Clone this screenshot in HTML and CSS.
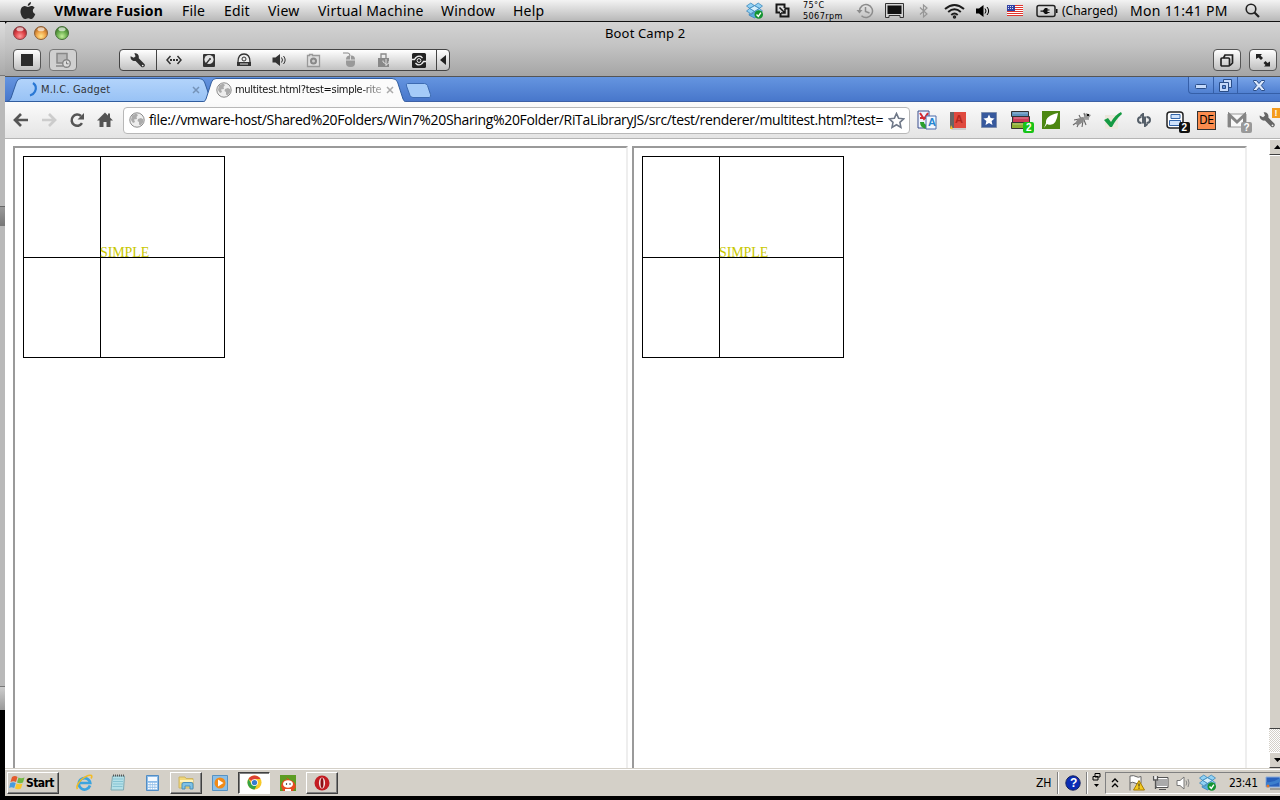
FILE: index.html
```html
<!DOCTYPE html>
<html lang="en">
<head>
<meta charset="utf-8">
<title>Boot Camp 2</title>
<link rel="stylesheet" href="styles.css">
</head>
<body>
<svg class="defs" width="0" height="0">
  <defs>
    <linearGradient id="tabBlue" x1="0" y1="0" x2="0" y2="1"><stop offset="0" stop-color="#b3d4fb"/><stop offset="1" stop-color="#98c2f5"/></linearGradient>
    <radialGradient id="red" cx=".5" cy=".75" r=".7"><stop offset="0" stop-color="#ff9c9c"/><stop offset=".5" stop-color="#e2484c"/><stop offset="1" stop-color="#9a1e25"/></radialGradient>
    <radialGradient id="amber" cx=".5" cy=".75" r=".7"><stop offset="0" stop-color="#ffe68c"/><stop offset=".5" stop-color="#f0a549"/><stop offset="1" stop-color="#a9601e"/></radialGradient>
    <radialGradient id="green" cx=".5" cy=".75" r=".7"><stop offset="0" stop-color="#c2ee9a"/><stop offset=".5" stop-color="#70b352"/><stop offset="1" stop-color="#367226"/></radialGradient>
    <symbol id="globe" viewBox="0 0 16 16"><circle cx="8" cy="8" r="7.2" fill="#ededed" stroke="#8a8a8a"/><path d="M3 3.500L7 1.500 9 3 7.500 5 8 7 5 7.500 6 10 4 11 2 8zM9 7l3-1 2.500 1.500-.5 3-2.500 3-1.500-1L10 10 8.500 9z" fill="#ababab"/></symbol>
    <symbol id="dropbox" viewBox="0 0 16 16"><g stroke="#3382b8" stroke-width=".7"><path d="M4.500 1L8 3.500 3.500 6 .5 3.800zM11.500 1L8 3.500 12.500 6l3-2.200zM.5 8.500L3.500 6 8 8.800 4.500 11zM15.500 8.500L12.500 6 8 8.800 11.500 11z" fill="#92d2f5"/><path d="M8 3.500L12.500 6 8 8.800 3.500 6z" fill="#d5effc"/><path d="M3 11l1.500 1L8 9.500l3.500 2.500 1.500-1v1.500L8 15l-5-2.500z" fill="#58ace0"/></g><circle cx="12" cy="11.700" r="4" fill="#149431"/><path d="M9.900 11.700l1.700 1.900L14 10" fill="none" stroke="#fff" stroke-width="1.300"/></symbol>
    <symbol id="wrench" viewBox="0 0 16 16"><path d="M1.500 4l3 1.500L6.200 4 5 1.200C8 .8 9.800 3 9.200 5.800l5.300 5.400c1.500 1.700-1 4.300-2.800 2.800L6.200 8.500C3.500 9 1 7 1.500 4z" fill="currentColor"/><circle cx="12.900" cy="12.700" r=".8" fill="#eee"/></symbol>
    <symbol id="speaker" viewBox="0 0 16 16"><path d="M1 5.500h3L8.500 2v12L4 10.500H1z" fill="currentColor"/><path d="M10 5.500q2 2.500 0 5M12 4q3.300 4 0 8" fill="none" stroke="currentColor"/></symbol>
    <symbol id="arrow" viewBox="0 0 16 16"><path d="M8 2L2 8l6 6M2.500 8H15" fill="none" stroke="currentColor" stroke-width="2.700"/></symbol>
    <symbol id="close" viewBox="0 0 8 8"><path d="M1 1l6 6M7 1L1 7" stroke="currentColor" stroke-width="1.500"/></symbol>
  </defs>
</svg>

<header class="menubar">
  <svg class="apple" viewBox="0 0 16 18"><path d="M11 0c.2 2-1.400 3.900-3.200 4C7.500 2 9 .4 11 0zM8 4.900c1 0 2-.9 3.500-.8 1.300 0 2.500.7 3.100 1.700-2.600 1.600-2.200 5.200.7 6.300C14.500 14.300 13 17 11.500 17c-1.300 0-1.700-.8-3.300-.8S6.100 17 5 17C2.500 17 .2 12 .5 9c.2-3 2-4.800 4.100-4.900C6 4 7 4.900 8 4.900z" fill="#2b2b2b"/></svg>
  <nav class="menus">
    <b class="m-app">VMware Fusion</b><span class="m-file">File</span><span class="m-edit">Edit</span><span class="m-view">View</span><span class="m-vm">Virtual Machine</span><span class="m-window">Window</span><span>Help</span>
  </nav>
  <div class="status">
    <svg class="s-dropbox" width="17" height="17"><use href="#dropbox"/></svg>
    <svg class="s-vm" width="15" height="15" viewBox="0 0 15 15"><path d="M5 9.500H1.500v-8h8V5M9.500 5.500h4v8h-8V10" fill="none" stroke="#161616" stroke-width="2"/><path d="M4.500 4.500l5 5M10 6v4H6" fill="none" stroke="#161616" stroke-width="1.500"/></svg>
    <div class="sensor"><span>75°C</span><span>5067rpm</span></div>
    <svg class="s-clock" width="18" height="16" viewBox="0 0 18 16" fill="none" stroke="#8c8c8c" stroke-width="1.500"><path d="M3.500 8a6.500 6.500 0 1 1 2 4.700M9.500 4v4.500l4 1.500"/><path d="M.5 7h6l-3 3.500z" fill="#8c8c8c" stroke="none"/></svg>
    <svg class="s-display" width="19" height="16" viewBox="0 0 19 16"><path d="M.5.500h18v14H15v-2H4v2H.5z" fill="#d4d4d4" stroke="#333"/><path d="M2.500 2.500h14V11h-14z" fill="#111"/></svg>
    <svg class="s-bt" width="10" height="16" viewBox="0 0 10 16"><path d="M1 4.500l7 6.500-3.500 3V2L8 5l-7 6.500" fill="none" stroke="#969696" stroke-width="1.200"/></svg>
    <svg class="s-wifi" width="21" height="16" viewBox="0 0 21 16" fill="none" stroke="#1c1c1c" stroke-width="2"><path d="M1 6Q10.500-2 20 6M4.200 9q6.300-5.500 12.600 0M7.300 12q3.200-3 6.400 0"/><circle cx="10.500" cy="14" r="1" stroke-width="1.500"/></svg>
    <svg class="s-sound" width="16" height="16"><use href="#speaker"/></svg>
    <svg class="s-flag" width="16" height="11" viewBox="0 0 16 11"><path fill="#fff" d="M0 0h16v11H0z"/><path d="M0 .5h16M0 2.500h16M0 4.500h16M0 6.500h16M0 8.500h16M0 10.500h16" stroke="#e0342d"/><path fill="#3041a5" d="M0 0h8v6H0z"/><path d="M1 1.500h6M1 3.500h6" stroke="#dde" stroke-dasharray="1 1"/></svg>
    <svg class="s-battery" width="22" height="14" viewBox="0 0 22 14"><rect x="1" y="1.500" width="18" height="11" rx="2" fill="none" stroke="#222" stroke-width="1.500"/><path d="M20 5h1.500v4H20zM4.500 6.500H7l2-2.500h2.500v1.500h2v1h-2v1.500h2v1h-2V10H9L7 7.700H4.500z" fill="#111"/></svg>
    <span class="charged">(Charged)</span>
    <span class="clock">Mon 11:41 PM</span>
    <svg class="s-search" width="15" height="15" viewBox="0 0 15 15" fill="none" stroke="#222"><circle cx="6" cy="6" r="4.800" stroke-width="1.600"/><path d="M9.500 9.500L14 14" stroke-width="2.200"/></svg>
  </div>
</header>

<div class="desktop">
  <aside class="behind"><i class="b-title"></i><i class="b-a"></i><i class="b-scroll"></i><i class="b-b"></i><i class="b-foot"></i></aside>
  <section class="window">
    <div class="titlebar">
      <svg class="lights" width="58" height="14" viewBox="0 0 58 14"><circle cx="7" cy="7" r="6.500" fill="url(#red)" stroke="#884347"/><circle cx="28" cy="7" r="6.500" fill="url(#amber)" stroke="#8c6037"/><circle cx="49" cy="7" r="6.500" fill="url(#green)" stroke="#48703a"/><g fill="#fff" opacity=".65"><ellipse cx="7" cy="3.200" rx="3.500" ry="2"/><ellipse cx="28" cy="3.200" rx="3.500" ry="2"/><ellipse cx="49" cy="3.200" rx="3.500" ry="2"/></g></svg>
      <h1>Boot Camp 2</h1>
    </div>
    <div class="vmtools">
      <button class="vbtn"><svg width="14" height="14"><path d="M1 1h12v12H1z" fill="#2b2b2b"/></svg></button>
      <button class="vbtn dim"><svg width="16" height="16" viewBox="0 0 16 16"><path d="M2 1.500h10v9.500H2z" fill="#b9b9b9" stroke="#888" stroke-width="1.500"/><path d="M1 14h7" stroke="#888" stroke-width="1.500"/><circle cx="11.500" cy="11.500" r="3.800" fill="#ddd" stroke="#858585" stroke-width="1.400"/><path d="M11.500 9.500v2.300h2" fill="none" stroke="#777"/></svg></button>
      <div class="group">
        <span class="cell first"><svg width="17" height="17"><use href="#wrench"/></svg></span>
        <span class="cell"><svg width="16" height="14" viewBox="0 0 16 14"><path d="M4.500 3L1 7l3.500 4M11.500 3L15 7l-3.500 4" fill="none" stroke="#333" stroke-width="1.500"/><path d="M4 7h8" stroke="#333" stroke-width="2" stroke-dasharray="2 1"/></svg></span>
        <span class="cell"><svg width="14" height="15" viewBox="0 0 14 15"><rect x="1" y="1" width="12" height="13" rx="1" fill="#333"/><circle cx="7" cy="6.500" r="4.600" fill="#e3e3e3"/><path d="M3.500 11.500l4-5" stroke="#333" stroke-width="1.300"/><circle cx="8" cy="6" r="1" fill="#333"/></svg></span>
        <span class="cell"><svg width="16" height="14" viewBox="0 0 16 14"><path d="M2 9q0-8 6-8t6 8" fill="#eee" stroke="#333" stroke-width="1.300"/><circle cx="8" cy="6" r="2" fill="none" stroke="#333"/><path d="M1 9h14v4H1z" fill="#333"/><path d="M4 11h8" stroke="#ddd"/></svg></span>
        <span class="cell"><svg width="17" height="16"><use href="#speaker"/></svg></span>
        <span class="cell"><svg width="15" height="15" viewBox="0 0 15 15"><path d="M1.500 2.500h2V1.500h3v1h7v11h-12z" fill="#ddd" stroke="#999" stroke-width="1.300"/><circle cx="7.500" cy="8" r="2.500" fill="#ccc" stroke="#888" stroke-width="2"/></svg></span>
        <span class="cell"><svg width="14" height="16" viewBox="0 0 14 16"><path d="M1 1h5q2 0 2 3" fill="none" stroke="#888"/><rect x="4" y="3.500" width="9" height="11.500" rx="4" fill="#999"/><path d="M4 8h9M8.500 3.500V8" stroke="#ddd"/></svg></span>
        <span class="cell"><svg width="14" height="15" viewBox="0 0 14 15"><path d="M4 5V1h5v4" fill="none" stroke="#888" stroke-width="1.300"/><path d="M1 5h11v9H1z" fill="#888"/><path d="M9 13V6M9 11L6 9V7.500M9 12l3-2V8" fill="none" stroke="#ddd"/></svg></span>
        <span class="cell"><svg width="16" height="15" viewBox="0 0 16 15"><rect x="1" y="0" width="14" height="15" rx="1.500" fill="#222"/><path d="M1 6.500h2.500Q6 2 10 3.500l1.500 1.500M15 8.500h-2.500Q10 13 6 11.500L4.500 10" fill="none" stroke="#eee" stroke-width="1.400"/><circle cx="8" cy="7.500" r="1.900" fill="none" stroke="#eee"/></svg></span>
        <span class="cell last"><svg width="6" height="10"><path d="M6 0v10L0 5z" fill="#222"/></svg></span>
      </div>
      <div class="spacer"></div>
      <button class="vbtn"><svg width="16" height="15" viewBox="0 0 16 15" fill="none" stroke="#222" stroke-width="1.700"><rect x="2" y="5" width="8.500" height="8" rx="1"/><path d="M4.500 5L6 2h7.500v8L11 12.500"/></svg></button>
      <button class="vbtn right"><svg width="16" height="15" viewBox="0 0 16 15"><path d="M1 1h6L5.500 2.500l2.500 2.500-2 2-2.500-2.500L1 6zM15 13.500H9l1.500-1.500-2-2 2-2 2 2L15 8.500z" fill="#222"/></svg></button>
    </div>

    <div class="tabstrip">
      <div class="tab back">
        <svg class="shape" width="204" height="24" viewBox="0 0 204 24"><path d="M0 23.500Q3 23 4 20L9.500 4Q11 .5 14 .5H192Q196 .5 197.500 4L203 20v3.500z" fill="url(#tabBlue)" stroke="#315d9e"/></svg>
        <svg class="spin" width="12" height="15" viewBox="0 0 12 15"><path d="M5 1Q9.500 4 7 9.500 5.500 12.500 2 13.500" fill="none" stroke="#2a78d4" stroke-width="2.200"/></svg>
        <span class="tab-title">M.I.C. Gadget</span>
        <svg class="x blue" width="8" height="8"><use href="#close"/></svg>
      </div>
      <div class="tab front">
        <svg class="shape" width="208" height="25" viewBox="0 0 208 25"><path d="M0 24.500Q3 24 4 21L9.500 4Q11 .5 14 .5H190Q194 .5 195.500 4L201 21q1 3 4 3.500" fill="#fbfbfb" stroke="#315d9e"/><path d="M0 24.500h206" stroke="#fbfbfb"/></svg>
        <svg class="fav" width="16" height="16"><use href="#globe"/></svg>
        <span class="tab-title fade">multitest.html?test=simple-rite</span>
        <svg class="x" width="8" height="8"><use href="#close"/></svg>
      </div>
      <svg class="newtab" width="27" height="17" viewBox="0 0 27 17"><path d="M2.500 1.500h17q2 0 3 2l3 9q1 3-1.500 3H8q-2 0-3-2L1.500 4q-.8-2.500 1-2.500z" fill="#a5cbf8" stroke="#3d6bb2"/></svg>
      <div class="spacer"></div>
      <div class="winctl">
        <span><svg width="12" height="6"><rect x=".5" y=".5" width="11" height="4" rx="1" fill="#c5dafb" stroke="#294d88"/></svg></span>
        <span><svg width="13" height="13" viewBox="0 0 13 13" fill="#c5dafb" stroke="#294d88"><path d="M4.500.5h8v8h-8z"/><path d="M.5 3.500h9v9h-9z"/><path d="M3.500 6.500h3v3h-3z" fill="#5f8fdb"/></svg></span>
        <span class="wx"><svg width="12" height="11" viewBox="0 0 12 11"><path d="M.5.500h3L6 3.500 8.500.5h3v1l-3.200 4 3.200 4v1h-3L6 7.500l-2.500 3h-3v-1l3.200-4-3.200-4z" fill="#dce9fd" stroke="#294d88"/></svg></span>
      </div>
    </div>

    <div class="toolbar">
      <div class="nav">
        <svg width="16" height="16"><use href="#arrow"/></svg>
        <svg class="fwd" width="16" height="16"><use href="#arrow"/></svg>
        <svg width="16" height="16" viewBox="0 0 16 16"><path d="M13 11.200A5.600 5.600 0 1 1 12 4" fill="none" stroke="currentColor" stroke-width="2.500"/><path d="M15 1v6.500H8.500z" fill="currentColor"/></svg>
        <svg width="16" height="16" viewBox="0 0 16 16"><path d="M8 .5L0 8.500h2.500V15H6.500V10h3v5h4V8.500H16L13 5.500V1.500h-2v2z" fill="currentColor"/></svg>
      </div>
      <div class="omnibox">
        <svg width="16" height="16"><use href="#globe"/></svg>
        <span class="url">file://vmware-host/Shared%20Folders/Win7%20Sharing%20Folder/RiTaLibraryJS/src/test/renderer/multitest.html?test=</span>
        <svg class="star" width="17" height="17" viewBox="0 0 17 17"><path d="M8.500 1.500l2.100 4.700 5.100.6-3.800 3.500 1 5.100-4.400-2.600-4.500 2.600 1-5.100L1.200 6.800l5.200-.6z" fill="#fff" stroke="#6f7888" stroke-width="1.600"/></svg>
      </div>
      <div class="exts">
        <span><svg width="20" height="20" viewBox="0 0 20 20"><path d="M1 1h11v17H1z" fill="#eef3ff" stroke="#3b4f8b"/><path d="M3 3l4 6 4-6M3 8h7" fill="none" stroke="#d52b32" stroke-width="2"/><path d="M5 12q0 5 6 5" fill="none" stroke="#2aa02f" stroke-width="4"/><path d="M9 6h10v13H9z" fill="#f3f8ff" stroke="#4d6ba9"/></svg><em class="letter blue-a">A</em></span>
        <span><svg width="18" height="19" viewBox="0 0 18 19"><path d="M1 1h16v16H1z" fill="#e04a3f"/><path d="M1 1h4v16H1z" fill="#666"/><path d="M1 17h16v2H3z" fill="#ccc"/><path d="M2 14l2 4H1z" fill="#f8c426"/></svg><em class="letter red-a">A</em></span>
        <span><svg width="16" height="16" viewBox="0 0 16 16"><path d="M.5.500h15v15H.5z" fill="#37599d" stroke="#7d8ead"/><path d="M8 2.500l1.600 3.600 4 .4-3 2.600.9 3.900L8 11l-3.500 2 .9-3.900-3-2.600 4-.4z" fill="#fff"/></svg></span>
        <span><svg width="20" height="18" viewBox="0 0 20 18"><path d="M1.500.500h17v5h-17z" fill="#5e92bd" stroke="#333"/><path d="M2.500 5.500h17v6h-17z" fill="#cc3c58" stroke="#333"/><path d="M1.500 11.500h17v6h-17z" fill="#8cae33" stroke="#333"/><path d="M3 2h15M4 7h14M3 13h10" stroke="#fff" opacity=".4"/></svg><em class="badge green">2</em></span>
        <span><svg width="18" height="18" viewBox="0 0 18 18"><path d="M0 0h18v18H0z" fill="#4c8712"/><path d="M16 2Q14 17 5 13l-3 4 2-5Q3 5 16 2z" fill="#fff"/></svg></span>
        <span><svg width="20" height="18" viewBox="0 0 20 18"><path d="M2 9l5-1M5 16l3-6M10 16l1-6M14 14l-2-5M7 4l2 4M12 2l1 4M17 8h-5M1 14l6-4" stroke="#666" stroke-width="1.100"/><ellipse cx="8" cy="10" rx="5" ry="2.600" fill="#8a8a8a" transform="rotate(-40 8 10)"/><path d="M11 7l3-5 5 2-3 4z" fill="#999"/><path d="M15 3h2v2h-2z" fill="#111"/></svg></span>
        <span><svg width="20" height="18" viewBox="0 0 20 18"><path d="M2 4h13v14H2z" fill="#ece7dc"/><path d="M1 9l4-2 3 4q4-7 10-10l1 2q-6 5-10 13H7z" fill="#159a42"/></svg></span>
        <span><svg width="14" height="14" viewBox="0 0 14 14" fill="none" stroke="#555f69" stroke-width="2"><path d="M3.500 3L6 1v9.500M4.500 4Q1 4 1 7t3.500 3M10.500 11L8 13V3.500M9.500 4Q13 4 13 7t-3.500 3"/></svg></span>
        <span><svg width="19" height="19" viewBox="0 0 19 19"><rect x="1" y="1" width="16" height="16" rx="3" fill="#fff" stroke="#222" stroke-width="1.500"/><path d="M5 3.500h9v4H5zM3.500 9.500h11v5h-11z" fill="#cfe2fb" stroke="#3365a9"/></svg><em class="badge black">2</em></span>
        <span><i class="de">DE</i></span>
        <span><svg width="20" height="17" viewBox="0 0 20 17"><path d="M1 2h18v13H1z" fill="#f8f8f8" stroke="#999"/><path d="M2.500 15V3l7.500 7 7.500-7v12" fill="none" stroke="#858585" stroke-width="3"/></svg><em class="badge gray">?</em></span>
        <span class="settings"><svg width="18" height="18"><use href="#wrench"/></svg><em class="alert">!</em></span>
      </div>
    </div>

    <main class="page">
      <div class="frame"><div class="canvas"><i class="vline"></i><i class="hline"></i><span>SIMPLE</span></div></div>
      <div class="frame"><div class="canvas"><i class="vline"></i><i class="hline"></i><span>SIMPLE</span></div></div>
      <div class="spacer"></div>
      <div class="scroll"><div class="sbtn"><svg width="7" height="4"><path d="M3.500 0L7 4H0z"/></svg></div><div class="thumb"></div><div class="track"></div><div class="sbtn"><svg width="7" height="4"><path d="M0 0h7L3.500 4z"/></svg></div></div>
    </main>

    <footer class="taskbar">
      <div class="start"><svg width="17" height="16" viewBox="0 0 17 16"><path d="M3 2q3-2 5.500 0L7 7Q4.500 5.500 1.500 7z" fill="#e35b2d"/><path d="M9.500 2.500Q12 4 15.500 2.500L14 7.500q-3 1.500-6 0z" fill="#72b943"/><path d="M1.200 8Q4 6.500 6.700 8l-1.500 5q-3-1.500-5 0z" fill="#479bde"/><path d="M7.500 8.500q3 1.500 6 0l-1.500 5q-3 1.500-6 0z" fill="#fac62c"/></svg><b>Start</b></div>
      <div class="tasks">
        <span><svg width="17" height="17" viewBox="0 0 17 17"><path d="M14 11.500A5.700 5.700 0 1 1 14.200 9H4" fill="none" stroke="#3aa4df" stroke-width="2.700"/><path d="M1.500 15Q-.5 12 5 6q7-6 10.500-4.500.8 1-.5 3" fill="none" stroke="#f2bb26" stroke-width="1.600"/></svg></span>
        <span><svg width="16" height="17" viewBox="0 0 16 17"><path d="M2.500 2h12l-1 14H1z" fill="#b4e0e8" stroke="#7fa9b2"/><path d="M3 5h10M3 7.500h10M3 10h10M2.500 12.500h10" stroke="#86c3d3"/><path d="M3 1.500h12" stroke="#555" stroke-width="2" stroke-dasharray="1 1"/></svg></span>
        <span><svg width="13" height="16" viewBox="0 0 13 16"><path d="M.5.500h12v15H.5z" fill="#8dbce9" stroke="#528dc4"/><path d="M2 2h9v4H2z" fill="#f3f9ff"/><path d="M2 8.500h9M2 11h9M2 13.500h9" stroke="#fff" stroke-width="1.600" stroke-dasharray="1.800 .6"/></svg></span>
        <span class="raised"><svg width="17" height="15" viewBox="0 0 17 15"><path d="M1 2h6l1 1.500h7V13H1z" fill="#f2d97b" stroke="#cdb463"/><path d="M2 6h13" stroke="#fff3bb" stroke-width="2"/><path d="M4 14V9q0-1.500 2-1.500h7q2 0 2 1.500v5h-3v-3H7v3z" fill="#7fc2e6" stroke="#4a8fba"/></svg></span>
        <span><svg width="16" height="16" viewBox="0 0 16 16"><path d="M.5.500h15v15H.5z" fill="#8bbfe8" stroke="#5692c4"/><circle cx="8" cy="8" r="5.500" fill="#f18a18"/><path d="M6 4.500v7L11.500 8z" fill="#fff"/></svg></span>
        <span class="pressed"><svg width="15" height="15" viewBox="0 0 16 16"><circle cx="8" cy="8" r="7.500" fill="#f7c927"/><path d="M8 8L1.500 4.300A7.500 7.500 0 0 1 14.500 4.300H8z" fill="#dd4033"/><path d="M1.500 4.300A7.500 7.500 0 0 0 8 15.500L10.500 11 5 10z" fill="#35a345"/><circle cx="8" cy="8" r="3.600" fill="#fff"/><circle cx="8" cy="8" r="2.800" fill="#347cd0"/></svg></span>
        <span><svg width="16" height="16" viewBox="0 0 16 16"><path d="M0 0h16v16H0z" fill="#5d9d24"/><path d="M1 11Q3 3 8 5l-2-3 4 3q5 1 6 7l-3 4H3z" fill="#e64a20"/><ellipse cx="8" cy="9" rx="5" ry="3.800" fill="#fff"/><path d="M5 14h6v2H5z" fill="#fff"/><circle cx="6.500" cy="9" r=".7"/><circle cx="10" cy="9" r=".7"/></svg></span>
        <span class="raised"><svg width="16" height="16" viewBox="0 0 16 16"><circle cx="8" cy="8" r="7.500" fill="#c31c22"/><ellipse cx="8" cy="8" rx="3.100" ry="5.500" fill="#f7e8e8"/><ellipse cx="8" cy="8" rx="1.500" ry="5" fill="#8e0d13"/></svg></span>
      </div>
      <div class="spacer"></div>
      <span class="lang">ZH</span>
      <div class="help"><svg width="16" height="16"><circle cx="8" cy="8" r="7.200" fill="#0b2db5" stroke="#16235f"/></svg><em>?</em></div>
      <div class="restore"><svg width="9" height="16" viewBox="0 0 9 16"><path d="M3 1.500h5V5H3zM1 4.500h5V8H1z" fill="#d4d0c8" stroke="#000"/><path d="M2 12h5L4.500 15z"/></svg></div>
      <div class="tray">
        <svg width="8" height="10" viewBox="0 0 8 10"><path d="M1 4l3-3 3 3M1 9l3-3 3 3" fill="none" stroke="#000" stroke-width="1.300"/></svg>
        <svg class="t-flag" width="17" height="16" viewBox="0 0 17 16"><path d="M2 15.500V1q4-1 6 .5t5 0v7q-4 1-6-.5T2 8" fill="#fff" stroke="#666"/><path d="M11 5.500L16.500 15h-11z" fill="#f3ca20" stroke="#a67c00"/><path d="M11 8.500v3M11 12.500v1.300" stroke="#222"/></svg>
        <svg class="t-net" width="17" height="16" viewBox="0 0 17 16"><path d="M4.500 3.500h11v8h-11z" fill="#aaa" stroke="#fff"/><path d="M4 2.500h12v10H4zM7 14.500h7" fill="none" stroke="#555"/><path d="M.5 1h5v5h-5z" fill="#eee"/><path d="M1.500 1v4h4V1M3.500 5v9" fill="none" stroke="#555" stroke-width="1.300"/></svg>
        <svg class="t-snd" width="15" height="16" viewBox="0 0 15 16"><path d="M1 5.500h3L8 2v12l-4-3.500H1z" fill="#fff" stroke="#777"/><path d="M10 5.500q1.500 2.500 0 5M12 4q2 4 0 8" fill="none" stroke="#888"/></svg>
        <svg class="t-box" width="17" height="17"><use href="#dropbox"/></svg>
        <span class="time">23:41</span>
        <svg class="t-desk" width="15" height="14" viewBox="0 0 15 14"><path d="M1 1h14v10H1z" fill="#2961bc" stroke="#8bacdc"/><path d="M1 6q7 1 14-4v4q-8 4-14 3z" fill="#3d7fcd"/><circle cx="3" cy="10" r="1.500" fill="#e47829"/><path d="M5 13h10" stroke="#666"/></svg>
      </div>
    </footer>
  </section>
</div>
</body>
</html>
```

FILE: styles.css
```css
* { box-sizing: border-box; }
body { margin: 0; width: 1280px; height: 800px; overflow: hidden; background: #000; color: #000; display: flex; flex-direction: column; font-family: "Open Sans", sans-serif; }
svg { display: block; flex: none; }
i, em { font-style: normal; }
button { padding: 0; }
.defs { position: absolute; }
.spacer { flex: 1; }

/* Mac menu bar */
.menubar { height: 22px; flex: none; display: flex; align-items: center; background: linear-gradient(#f3f3f3, #b8b8b8); border-bottom: 1px solid #111; white-space: nowrap; }
.apple { width: 16px; height: 18px; margin-left: 20px; }
.menus { display: flex; width: 710px; padding-left: 18px; font: 14px/20px "Noto Sans", sans-serif; letter-spacing: .2px; }
.menus > * { flex: none; }
.m-app { width: 128px; }
.m-file { width: 42px; }
.m-edit { width: 44px; }
.m-view { width: 50px; }
.m-vm { width: 123px; }
.m-window { width: 72px; }
.status { display: flex; align-items: center; flex: 1; }
.s-vm { margin-left: 12px; }
.sensor { width: 53px; height: 22px; margin-left: 13px; display: flex; flex-direction: column; font: 9px/11px "DejaVu Sans Condensed", sans-serif; letter-spacing: .4px; }
.s-clock { margin-left: 0; }
.s-display { margin-left: 11px; }
.s-bt { margin-left: 15px; }
.s-wifi { margin-left: 15px; }
.s-sound { margin-left: 10px; }
.s-flag { margin-left: 16px; }
.s-battery { margin-left: 13px; }
.charged { width: 68px; margin-left: 4px; font: 12px/20px "Noto Sans", sans-serif; }
.clock { width: 115px; font: 14px/20px "Noto Sans", sans-serif; letter-spacing: .3px; }

/* Window */
.desktop { flex: 1; display: flex; min-height: 0; }
.behind { width: 5px; display: flex; flex-direction: column; background: #b9b9b9; height: 688px; border-radius: 4px 0 0 0; }
.b-title { height: 54px; background: linear-gradient(#ddd, #aaa); border-bottom: 1px solid #777; }
.b-a { height: 130px; }
.b-scroll { height: 20px; background: linear-gradient(#999, #777); border-top: 1px solid #666; }
.b-b { height: 460px; }
.b-foot { flex: 1; border-top: 1px solid #777; background: linear-gradient(#ccc, #999); }
.window { width: 1275px; height: 774px; display: flex; flex-direction: column; overflow: hidden; background: #fff; border-radius: 4px 0 0 0; }
.titlebar { height: 24px; flex: none; display: flex; align-items: center; background: linear-gradient(#d3d3d3, #c3c3c3); padding-left: 8px; }
.lights { margin-top: -2px; }
.titlebar h1 { margin: -2px 0 0 534px; font: 13px/22px "Noto Sans", sans-serif; letter-spacing: .15px; white-space: nowrap; }
.vmtools { height: 31px; flex: none; display: flex; padding: 3px 3px 0 8px; background: linear-gradient(#c3c3c3, #a5a5a5); border-bottom: 1px solid #555; }
.vbtn { width: 28px; height: 22px; flex: none; display: flex; align-items: center; justify-content: center; border: 1px solid #555; border-radius: 4px; background: linear-gradient(#fff, #bfbfbf); }
.vbtn.dim { margin-left: 8px; border-color: #777; background: #d0d0d0; }
.vbtn.right { margin-left: 8px; }
.group { width: 331px; height: 22px; margin-left: 42px; display: flex; border: 1px solid #444; border-radius: 4px; background: linear-gradient(#fff, #c2c2c2); color: #333; }
.cell { width: 35px; display: flex; align-items: center; justify-content: center; }
.cell.first { width: 37px; border-right: 1px solid #444; }
.cell.last { width: 13px; border-left: 1px solid #444; }

/* Tabs */
.tabstrip { height: 25px; flex: none; display: flex; background: linear-gradient(#6595e0, #4877cb); border-bottom: 1px solid #3e61a5; padding-left: 2px; }
.tab { position: relative; display: flex; align-items: center; height: 25px; flex: none; font: 11px/24px "DejaVu Sans Condensed", sans-serif; white-space: nowrap; }
.shape { position: absolute; left: 0; top: 1px; }
.front .shape { left: -1px; }
.tab > :not(.shape) { position: relative; }
.back { width: 196px; color: #33363b; }
.spin { margin-left: 21px; }
.back .tab-title { width: 151px; margin-left: 1px; letter-spacing: .15px; }
.x { color: #aaa; }
.x.blue { color: #7593b8; }
.front { width: 200px; }
.fav { margin-left: 13px; }
.front .tab-title { width: 148px; margin-left: 3px; letter-spacing: -.3px; }
.fade { background: linear-gradient(90deg, #111 84%, #bbb); -webkit-background-clip: text; background-clip: text; color: transparent; }
.front .x { margin-left: 3px; }
.newtab { margin: 5px 0 0 2px; }
.winctl { display: flex; height: 17px; width: 92px; border: 1px solid #355fa8; border-width: 0 0 1px 1px; border-radius: 0 0 0 4px; background: linear-gradient(#78a4e8, #5080d1); }
.winctl span { width: 25px; display: flex; align-items: center; justify-content: center; border-right: 1px solid #355fa8; }
.winctl span:first-child { padding-top: 4px; }
.winctl .wx { width: 42px; border: 0; }

/* Browser toolbar */
.toolbar { height: 37px; flex: none; display: flex; align-items: center; background: linear-gradient(#fbfbfb, #e4e4e4); border-bottom: 1px solid #b5b5b5; }
.nav { width: 118px; flex: none; display: flex; gap: 12px; padding-left: 8px; color: #555; }
.fwd { transform: scaleX(-1); color: #ccc; }
.omnibox { width: 787px; height: 27px; flex: none; display: flex; align-items: center; border: 1px solid #b8b8b8; border-radius: 4px; background: #fff; padding-left: 5px; }
.url { width: 737px; margin-left: 4px; font: 14px/24px "Open Sans", sans-serif; letter-spacing: -.342px; white-space: nowrap; }
.star { margin-left: 2px; }
.exts { display: flex; width: 373px; flex: none; margin-left: 2px; }
.exts span { width: 31.1px; height: 24px; flex: none; display: flex; align-items: center; justify-content: center; position: relative; left: -1px; }
.letter { position: absolute; font: bold 11px/12px "Liberation Sans", sans-serif; }
.blue-a { left: 17px; top: 8px; color: #2685d0; }
.red-a { left: 13px; top: 5px; color: #b5261c; }
.badge { position: absolute; right: 1px; bottom: -1px; width: 11px; height: 11px; border-radius: 2px; color: #fff; font: bold 10px/11px "Liberation Sans", sans-serif; text-align: center; }
.green { background: #18c318; }
.black { background: #111; }
.gray { background: #999; }
.de { width: 19px; height: 19px; background: #fb8c4e; border: 1px solid #333; font: 12px/17px "DejaVu Sans Condensed", sans-serif; text-align: center; letter-spacing: -.4px; }
.settings { color: #666; }
.exts .settings { width: 28px; }
.alert { position: absolute; left: 19px; top: 0; width: 8px; height: 10px; background: #f49b1d; color: #fff; font: bold 9px/10px "Liberation Sans", sans-serif; text-align: center; }

/* Page */
.page { flex: 1; min-height: 0; display: flex; overflow: hidden; background: #fff; padding-left: 8px; }
.frame { width: 615px; height: 640px; flex: none; margin: 7px 4px 0 0; padding: 8px; border: 2px solid #eee; border-top-color: #9a9a9a; border-left-color: #9a9a9a; }
.canvas { position: relative; width: 202px; height: 202px; border: 1px solid #000; }
.vline { position: absolute; left: 76px; top: 0; width: 1px; height: 200px; background: #000; }
.hline { position: absolute; left: 0; top: 100px; width: 200px; height: 1px; background: #000; }
.canvas span { position: absolute; left: 76px; top: 88px; font: 14px/16px "Liberation Serif", serif; color: #c8c800; letter-spacing: -.1px; }
.scroll { width: 11px; display: flex; flex-direction: column; }
.sbtn { height: 16px; width: 16px; display: flex; align-items: center; justify-content: center; background: #d4d0c8; border: 1px solid; border-color: #fff #404040 #404040 #fff; }
.thumb { height: 574px; width: 16px; background: #d4d0c8; border: 1px solid; border-color: #fff #404040 #404040 #fff; }
.track { flex: 1; background: repeating-conic-gradient(#fff 0 25%, #d4d0c8 0 50%) 0 0 / 2px 2px; }

/* Taskbar */
.taskbar { height: 28px; flex: none; display: flex; align-items: center; background: #d4d0c8; border-top: 1px solid #d4d0c8; box-shadow: inset 0 1px #fff; padding: 2px 0 2px 2px; font: 12px/20px "DejaVu Sans Condensed", sans-serif; }
.start { width: 52px; height: 22px; display: flex; align-items: center; border: 1px solid; border-color: #fff #404040 #404040 #fff; box-shadow: inset -1px -1px #808080; padding-left: 1px; letter-spacing: -.6px; }
.tasks { display: flex; margin-left: 9px; gap: 2px; }
.tasks span { width: 32px; height: 22px; display: flex; align-items: center; justify-content: center; }
.raised { border: 1px solid; border-color: #fff #404040 #404040 #fff; box-shadow: inset -1px -1px #808080; }
.pressed { border: 1px solid; border-color: #404040 #fff #fff #404040; background: #fff; box-shadow: inset 1px 1px #808080; }
.lang { width: 21px; letter-spacing: -.2px; }
.help { position: relative; height: 22px; border-left: 1px solid #808080; box-shadow: inset 1px 0 #fff; padding: 3px 5px 0 7px; }
.help em { position: absolute; left: 12px; top: 3px; color: #fff; font: bold 12px/16px "Liberation Sans", sans-serif; }
.restore { width: 19px; height: 22px; padding-left: 5px; border-left: 1px solid #808080; box-shadow: inset 1px 0 #fff; }
.tray { width: 175px; height: 22px; display: flex; align-items: center; border: 1px solid #808080; border-right: 0; border-bottom-color: #fff; padding-left: 5px; }
.t-flag { margin-left: 9px; }
.t-net { margin-left: 7px; }
.t-snd { margin-left: 7px; }
.t-box { margin-left: 8px; }
.time { width: 33px; margin-left: 13px; letter-spacing: -.5px; }
.t-desk { margin-left: 3px; }
```
